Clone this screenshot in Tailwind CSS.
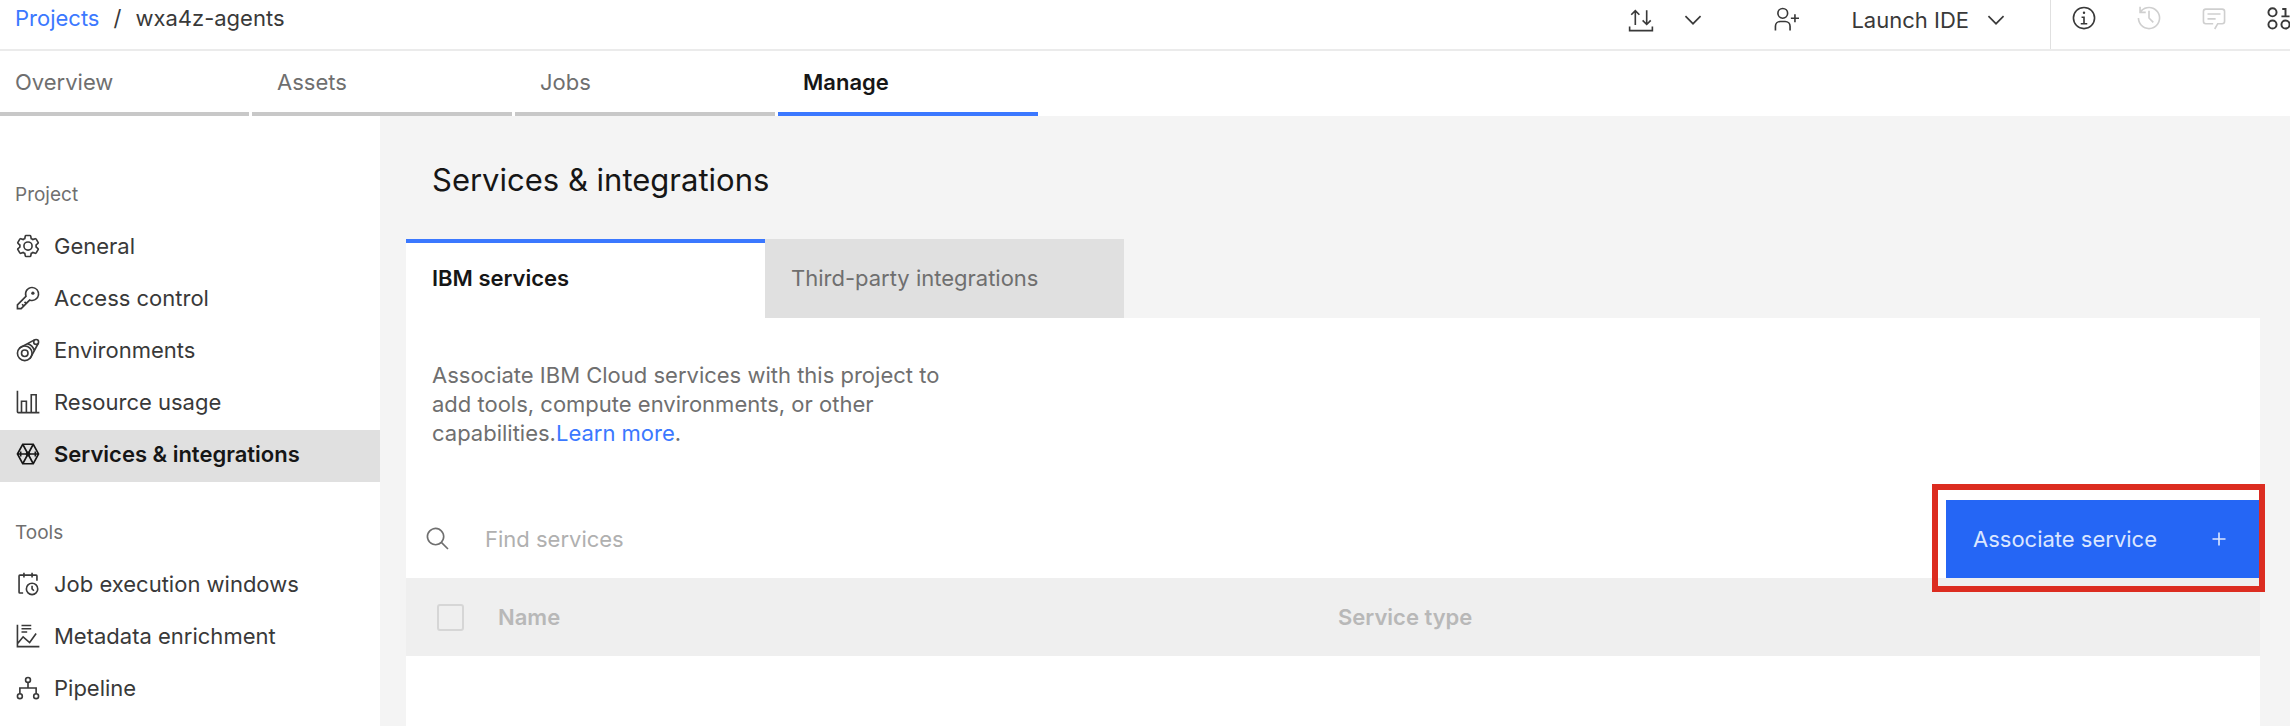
<!DOCTYPE html>
<html lang="en">
<head>
<meta charset="utf-8">
<meta name="viewport" content="width=device-width, initial-scale=1">
<title>Services &amp; integrations</title>
<script src="https://cdn.jsdelivr.net/npm/@tailwindcss/browser@4"></script>
</head>
<body class="flex min-h-screen flex-col overflow-x-hidden bg-[#f4f4f4] font-['Inter',sans-serif] text-[22px] text-[#393939]">

<header class="flex h-[51px] items-start justify-between overflow-hidden border-b-2 border-[#ebebeb] bg-white">
  <nav aria-label="Breadcrumb" class="flex gap-3.5 pl-[15px] leading-9">
    <a href="#" class="text-[#3b78ff]">Projects</a>
    <span>/</span>
    <span>wxa4z-agents</span>
  </nav>
  <div class="flex h-full shrink-0 items-start">
    <button type="button" aria-label="Import or export" class="flex h-10 items-center gap-[26px]">
      <svg class="size-[26px]" viewBox="0 0 32 32" fill="none" stroke="currentColor" stroke-width="2"><path d="M9 22V5M4 9.500l5-5 5 5M23 4v17M18 16.500l5 5 5-5M2 24v5h28v-5"/></svg>
      <svg class="size-[26px]" viewBox="0 0 32 32" fill="currentColor"><path d="M16 22 6 12l1.400-1.400 8.600 8.600 8.600-8.600L26 12z"/></svg>
    </button>
    <button type="button" aria-label="Add collaborators" class="ml-[67px] flex h-[38px] items-center">
      <svg class="size-[26px]" viewBox="0 0 32 32" fill="currentColor"><path d="M32 14h-4v-4h-2v4h-4v2h4v4h2v-4h4zM12 4a5 5 0 1 1-5 5 5 5 0 0 1 5-5m0-2a7 7 0 1 0 7 7 7 7 0 0 0-7-7zM22 30h-2v-5a5 5 0 0 0-5-5H9a5 5 0 0 0-5 5v5H2v-5a7 7 0 0 1 7-7h6a7 7 0 0 1 7 7z"/></svg>
    </button>
    <button type="button" class="ml-[52px] mr-[41px] flex h-10 items-center gap-3.5">Launch IDE
      <svg class="size-[26px]" viewBox="0 0 32 32" fill="currentColor"><path d="M16 22 6 12l1.400-1.400 8.600 8.600 8.600-8.600L26 12z"/></svg>
    </button>
    <div class="flex h-full w-[240px] items-start border-l border-[#e0e0e0]">
      <button type="button" aria-label="Information" class="flex h-[35px] w-[65px] shrink-0 items-center justify-center">
        <svg class="size-[26px]" viewBox="0 0 32 32" fill="currentColor"><path d="M17 22v-8h-4v2h2v6h-3v2h8v-2zM16 8a1.500 1.500 0 1 0 1.500 1.500A1.500 1.500 0 0 0 16 8z"/><path d="M16 30a14 14 0 1 1 14-14 14 14 0 0 1-14 14zm0-26a12 12 0 1 0 12 12A12 12 0 0 0 16 4z"/></svg>
      </button>
      <button type="button" aria-label="History" disabled class="flex h-[35px] w-[65px] shrink-0 items-center justify-center text-[#cfcfcf]">
        <svg class="size-[26px]" viewBox="0 0 32 32" fill="currentColor"><path d="M20.590 22 15 16.410V7h2v8.580l5 5.010L20.590 22z"/><path d="M16 2A13.940 13.940 0 0 0 6 6.230V2H4v8h8V8H7.080A12 12 0 1 1 4 16H2A14 14 0 1 0 16 2z"/></svg>
      </button>
      <button type="button" aria-label="Comments" disabled class="flex h-[35px] w-[65px] shrink-0 items-center justify-center text-[#cfcfcf]">
        <svg class="size-[26px]" viewBox="0 0 32 32" fill="currentColor"><path d="M17.740 30 16 29l4-7h6a2 2 0 0 0 2-2V8a2 2 0 0 0-2-2H6a2 2 0 0 0-2 2v12a2 2 0 0 0 2 2h9v2H6a4 4 0 0 1-4-4V8a4 4 0 0 1 4-4h20a4 4 0 0 1 4 4v12a4 4 0 0 1-4 4h-4.840z"/><path d="M8 10h16v2H8zM8 16h10v2H8z"/></svg>
      </button>
      <button type="button" aria-label="Data panel" class="flex h-[35px] w-[65px] shrink-0 items-center justify-center">
        <svg class="size-[26px]" viewBox="0 0 32 32" fill="none" stroke="currentColor" stroke-width="2.400"><circle cx="8" cy="9" r="5"/><circle cx="8" cy="24" r="5"/><circle cx="24" cy="24" r="5"/><path d="M20 5h4v9M19 14h10"/></svg>
      </button>
    </div>
  </div>
</header>

<nav aria-label="Project" class="flex h-[65px] gap-[3px] bg-white leading-[54px] text-[#6f6f6f]">
  <a href="#" class="w-[249px] border-b-4 border-[#c8c8c8] pl-[15px] pt-1">Overview</a>
  <a href="#" class="w-[260px] border-b-4 border-[#c8c8c8] pl-[25px] pt-1">Assets</a>
  <a href="#" class="w-[260px] border-b-4 border-[#c8c8c8] pl-[25px] pt-1">Jobs</a>
  <a href="#" aria-current="page" class="w-[260px] border-b-4 border-[#3b78ff] pl-[25px] pt-1 font-semibold text-[#161616]">Manage</a>
</nav>

<div class="flex flex-1">
  <aside class="w-[380px] shrink-0 bg-white pt-16">
    <h2 class="pl-[15px] text-[19px] leading-[30px] text-[#6f6f6f]">Project</h2>
    <ul class="mt-3">
      <li><a href="#" class="flex h-[52px] items-center gap-[13px] pb-1 pl-[15px]">
        <svg class="size-[26px]" viewBox="0 0 32 32" fill="currentColor"><path d="M27,16.760c0-.25,0-.5,0-.76s0-.51,0-.77l1.920-1.680A2,2,0,0,0,29.300,11L26.940,7a2,2,0,0,0-1.730-1,2,2,0,0,0-.64.1l-2.430.82a11.350,11.350,0,0,0-1.310-.75l-.51-2.520a2,2,0,0,0-2-1.610H13.640a2,2,0,0,0-2,1.610l-.51,2.520a11.480,11.480,0,0,0-1.320.75L7.430,6.060A2,2,0,0,0,6.790,6,2,2,0,0,0,5.060,7L2.700,11a2,2,0,0,0,.41,2.510L5,15.240c0,.25,0,.5,0,.76s0,.51,0,.77L3.110,18.450A2,2,0,0,0,2.700,21L5.060,25a2,2,0,0,0,1.730,1,2,2,0,0,0,.64-.1l2.430-.82a11.350,11.350,0,0,0,1.310.75l.51,2.520a2,2,0,0,0,2,1.610h4.720a2,2,0,0,0,2-1.610l.51-2.520a11.480,11.480,0,0,0,1.320-.75l2.420.82a2,2,0,0,0,.64.1,2,2,0,0,0,1.730-1L29.300,21a2,2,0,0,0-.41-2.510ZM25.210,24l-3.430-1.160a8.860,8.860,0,0,1-2.710,1.570L18.360,28H13.640l-.71-3.550a9.360,9.360,0,0,1-2.700-1.570L6.790,24,4.430,20l2.720-2.400a8.900,8.900,0,0,1,0-3.130L4.430,12,6.790,8l3.430,1.160a8.860,8.860,0,0,1,2.710-1.570L13.640,4h4.720l.71,3.550a9.360,9.360,0,0,1,2.700,1.570L25.210,8,27.570,12l-2.720,2.400a8.900,8.900,0,0,1,0,3.130L27.570,20Z"/><path d="M16,22a6,6,0,1,1,6-6A5.940,5.940,0,0,1,16,22Zm0-10a3.910,3.910,0,0,0-4,4,3.910,3.910,0,0,0,4,4,3.910,3.910,0,0,0,4-4A3.910,3.910,0,0,0,16,12Z"/></svg>General</a></li>
      <li><a href="#" class="flex h-[52px] items-center gap-[13px] pb-1 pl-[15px]">
        <svg class="size-[26px]" viewBox="0 0 32 32" fill="currentColor"><path d="M21,2a8.998,8.998,0,0,0-8.612,11.612L2,24v6H8L18.388,19.612A9,9,0,1,0,21,2Zm0,16a7.013,7.013,0,0,1-2.032-.302l-1.147-.348-.847.847-3.181,3.181L12.414,20,11,21.414l1.379,1.379-1.586,1.586L9.414,23,8,24.414l1.379,1.379L7.172,28H4V24.828l9.802-9.802.848-.847-.348-1.147A7,7,0,1,1,21,18Z"/><circle cx="22" cy="10" r="2"/></svg>Access control</a></li>
      <li><a href="#" class="flex h-[52px] items-center gap-[13px] pb-1 pl-[15px]">
        <svg class="size-[26px]" viewBox="0 0 32 32" fill="none" stroke="currentColor" stroke-width="2"><circle cx="12" cy="20" r="9"/><circle cx="12" cy="20" r="4"/><circle cx="26" cy="6" r="3"/><path d="M5.500 13.500 24 3.500M18.500 26.500 28.500 8M15.500 8.500a11 11 0 0 1 8 8"/></svg>Environments</a></li>
      <li><a href="#" class="flex h-[52px] items-center gap-[13px] pb-1 pl-[15px]">
        <svg class="size-[26px]" viewBox="0 0 32 32" fill="currentColor"><path d="M27,28V6H19V28H15V14H7V28H4V2H2V28a2,2,0,0,0,2,2H30V28ZM13,28H9V16h4Zm12,0H21V8h4Z"/></svg>Resource usage</a></li>
      <li><a href="#" aria-current="page" class="flex h-[52px] items-center gap-[13px] bg-[#e0e0e0] pb-1 pl-[15px] font-semibold text-[#161616]">
        <svg class="size-[26px]" viewBox="0 0 32 32" fill="none" stroke="currentColor" stroke-width="2"><path d="M3 16 9.500 4h13L29 16l-6.500 12h-13zM3 16h26M9.500 4l13 24M22.500 4l-13 24"/><circle cx="16" cy="16" r="2" fill="currentColor"/><path d="M7 13v6M25 13v6"/></svg>Services &amp; integrations</a></li>
    </ul>
    <h2 class="mt-9 pl-[15px] text-[19px] leading-[30px] text-[#6f6f6f]">Tools</h2>
    <ul class="mt-3">
      <li><a href="#" class="flex h-[52px] items-center gap-[13px] pb-1 pl-[15px]">
        <svg class="size-[26px]" viewBox="0 0 32 32" fill="currentColor"><path d="M21 30a8 8 0 1 1 8-8 8 8 0 0 1-8 8m0-14a6 6 0 1 0 6 6 6 6 0 0 0-6-6z"/><path d="M22.590 25 20 22.410V18h2v3.590l2 2z"/><path d="M28 6a2 2 0 0 0-2-2h-4V2h-2v2h-8V2h-2v2H6a2 2 0 0 0-2 2v20a2 2 0 0 0 2 2h4v-2H6V6h4v2h2V6h8v2h2V6h4v6h2z"/></svg>Job execution windows</a></li>
      <li><a href="#" class="flex h-[52px] items-center gap-[13px] pb-1 pl-[15px]">
        <svg class="size-[26px]" viewBox="0 0 32 32" fill="none" stroke="currentColor" stroke-width="2"><path d="M3 2v27h27M8 3h12M8 7h12M8 11h7M3.500 25 10 17l8 7 8-11"/></svg>Metadata enrichment</a></li>
      <li><a href="#" class="flex h-[52px] items-center gap-[13px] pb-1 pl-[15px]">
        <svg class="size-[26px]" viewBox="0 0 32 32" fill="none" stroke="currentColor" stroke-width="2"><circle cx="16" cy="6" r="3"/><circle cx="6" cy="26" r="3"/><circle cx="26" cy="26" r="3"/><path d="M16 9v7M6 23v-7h20v7"/></svg>Pipeline</a></li>
    </ul>
  </aside>

  <main class="flex min-w-0 flex-1 flex-col pl-[26px] pr-[30px] pt-11">
    <h1 class="pl-[26px] text-[31px] leading-10 text-[#161616]">Services &amp; integrations</h1>
    <div role="tablist" class="mt-[39px] flex h-[79px]">
      <button type="button" role="tab" aria-selected="true" class="w-[359px] bg-white pl-[26px] text-left font-semibold text-[#161616] shadow-[inset_0_4px_0_#3b78ff]">IBM services</button>
      <button type="button" role="tab" aria-selected="false" class="w-[359px] bg-[#e0e0e0] pl-[26px] text-left text-[#6f6f6f]">Third-party integrations</button>
    </div>
    <section role="tabpanel" class="flex-1 bg-white pt-[43px]">
      <p class="max-w-[560px] pl-[26px] leading-[29px] text-[#6f6f6f]">Associate IBM Cloud services with this project to add tools, compute environments, or other capabilities.<a href="#" class="text-[#3b78ff]">Learn more</a>.</p>
      <div class="mt-[52px] flex h-[78px]">
        <label for="find" class="flex items-center pl-[19px] text-[#6f6f6f]">
          <svg role="img" aria-label="Find services" class="size-[26px]" viewBox="0 0 32 32" fill="currentColor"><path d="M29,27.586l-7.552-7.552a11.018,11.018,0,1,0-1.414,1.414L27.586,29ZM4,13a9,9,0,1,1,9,9A9.010,9.010,0,0,1,4,13Z"/></svg>
        </label>
        <input id="find" type="search" placeholder="Find services" class="min-w-0 flex-1 pl-[34px] outline-none placeholder:text-[#b0b0b0]">
        <div class="relative w-[314px]">
          <button type="button" class="flex size-full items-center justify-between bg-[#2566f5] pl-[27px] pr-7 text-[#dbe6ff]">Associate service
            <svg class="size-[26px]" viewBox="0 0 32 32" fill="currentColor"><path d="M17 15V8h-2v7H8v2h7v7h2v-7h7v-2z"/></svg>
          </button>
          <span class="pointer-events-none absolute -bottom-[14px] -left-[14px] -right-[5px] -top-4 border-[6px] border-[#dc2c20]"></span>
        </div>
      </div>
      <table class="w-full table-fixed text-left text-[#b8b8b8]">
        <colgroup><col class="w-[92px]"><col class="w-[840px]"><col></colgroup>
        <thead><tr class="h-[78px] bg-[#efefef]">
          <th class="pl-[31px]"><input type="checkbox" disabled aria-label="Select all services" class="block size-[27px] appearance-none rounded-[3px] border-2 border-[#d6d6d6]"></th>
          <th class="font-semibold">Name</th>
          <th class="font-semibold">Service type</th>
        </tr></thead>
      </table>
    </section>
  </main>
</div>
</body>
</html>
